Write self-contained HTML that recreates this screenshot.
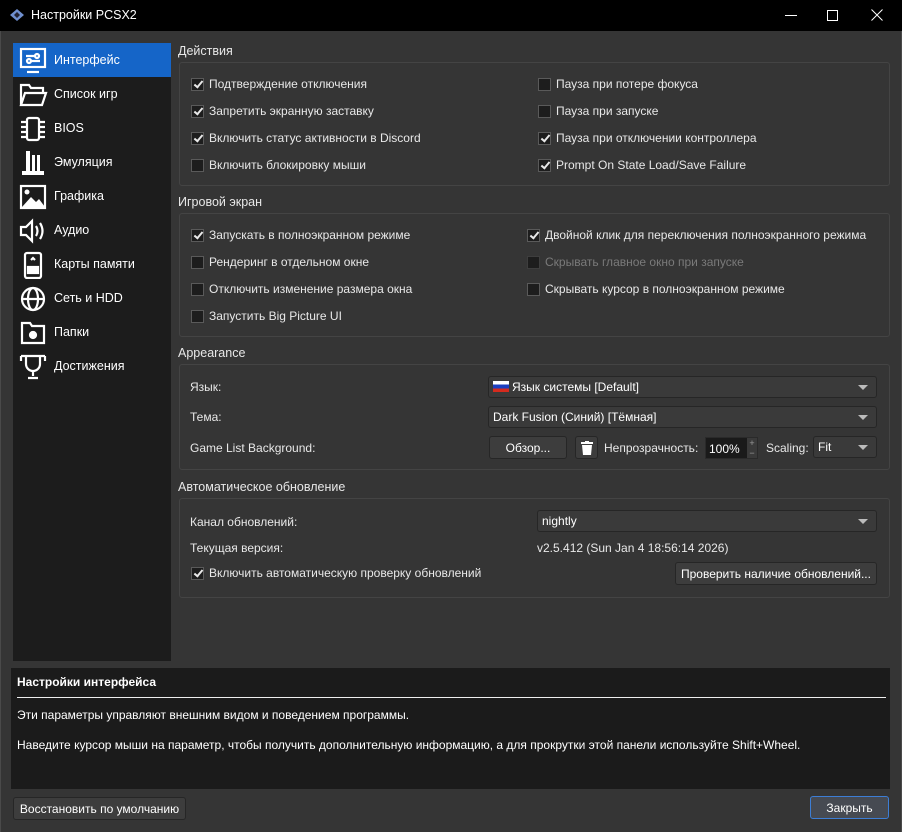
<!DOCTYPE html>
<html><head><meta charset="utf-8"><style>
*{margin:0;padding:0;box-sizing:border-box}
body{width:902px;height:832px;background:#353535;font-family:"Liberation Sans","DejaVu Sans",sans-serif;font-size:12px;color:#e8e8e8;position:relative;overflow:hidden}
.a{position:absolute;white-space:nowrap}
.title{left:0;top:0;width:902px;height:31px;background:#000}
.side{left:13px;top:43px;width:158px;height:618px;background:#1c1c1c}
.it{position:absolute;left:0;width:158px;height:34px;color:#fff;font-size:12.5px}
.it span{position:absolute;left:41px;top:10px}
.it svg{position:absolute;left:5px;top:4px}
.sel{background:#1565c8}
.lbl{font-size:12.5px}
.box{border:1px solid #444;border-radius:3px;background:#353535}
.cb{position:absolute;width:13px;height:13px;background:#1d1d1d;border:1px solid #5a5a5a}
.cb.on::after{content:"";position:absolute;left:3.5px;top:0px;width:3px;height:7px;border:solid #e8e8e8;border-width:0 2px 2px 0;transform:rotate(40deg)}
.cb.dis{border-color:#3e3e3e}
.combo{position:absolute;height:22px;background:#3a3a3a;border:1px solid #262626;border-radius:3px;padding:3px 4px;color:#fff}
.combo::after{content:"";position:absolute;right:8px;top:8px;border-left:5px solid transparent;border-right:5px solid transparent;border-top:5px solid #bbb}
.btn{position:absolute;height:23px;background:#3d3d3d;border:1px solid #262626;border-radius:3px;text-align:center;padding-top:4px;color:#fff}
</style></head><body>
<div class="a title"></div>
<div class="a" style="left:0;top:31px;width:1px;height:801px;background:#4a4a4a"></div>
<div class="a" style="left:901px;top:31px;width:1px;height:801px;background:#4a4a4a"></div>
<svg class="a" style="left:10px;top:9px" width="14" height="12" viewBox="0 0 14 12"><path d="M7 0L14 6L7 12L0 6Z" fill="#6f8fcf"/><path d="M7 3L10 6L7 9L4 6Z" fill="#223"/></svg>
<div class="a" style="left:31px;top:8px;color:#fff;font-size:12.5px">Настройки PCSX2</div>
<div class="a" style="left:785px;top:15px;width:12px;height:1px;background:#fff"></div>
<div class="a" style="left:827px;top:10px;width:11px;height:11px;border:1px solid #fff"></div>
<svg class="a" style="left:871px;top:9px" width="12" height="12"><path d="M0.5 0.5L11.5 11.5M11.5 0.5L0.5 11.5" stroke="#fff"/></svg>

<div class="a side">
<div class="it sel" style="top:0"><svg width="30" height="28" viewBox="0 0 30 28" fill="none" stroke="#fff" stroke-width="2.2"><rect x="3" y="2" width="24" height="18"/><path d="M9 25h12"/><circle cx="11" cy="14" r="2"/><path d="M13 14h9M8 9h9"/><circle cx="19" cy="9" r="2"/></svg><span>Интерфейс</span></div>
<div class="it" style="top:34px"><svg width="30" height="28" viewBox="0 0 30 28" fill="none" stroke="#fff" stroke-width="2.2"><path d="M3 24V4h8l2 3h12v5M3 24l4-12h21l-4 12z"/></svg><span>Список игр</span></div>
<div class="it" style="top:68px"><svg width="30" height="28" viewBox="0 0 30 28" fill="none" stroke="#fff" stroke-width="2.2"><rect x="9" y="3" width="12" height="22" rx="2"/><path d="M3 7h6M3 12h6M3 17h6M3 22h6M21 7h6M21 12h6M21 17h6M21 22h6"/></svg><span>BIOS</span></div>
<div class="it" style="top:102px"><svg width="30" height="28" viewBox="0 0 30 28" fill="#fff"><path d="M8 2h4v20H8zM14 6h3v16h-3zM19 6h3v16h-3zM4 22h22v4H4z"/></svg><span>Эмуляция</span></div>
<div class="it" style="top:136px"><svg width="30" height="28" viewBox="0 0 30 28"><rect x="3" y="3" width="24" height="22" fill="none" stroke="#fff" stroke-width="2.2"/><circle cx="9" cy="9" r="2.5" fill="#fff"/><path d="M4 24l9-10 5 5 3-3 6 8z" fill="#fff"/></svg><span>Графика</span></div>
<div class="it" style="top:170px"><svg width="30" height="28" viewBox="0 0 30 28" fill="none" stroke="#fff" stroke-width="2.2"><path d="M3 10h5l6-6v20l-6-6H3z"/><path d="M18 9q3 5 0 10M22 6q5 8 0 16"/></svg><span>Аудио</span></div>
<div class="it" style="top:204px"><svg width="30" height="28" viewBox="0 0 30 28" fill="none" stroke="#fff" stroke-width="2.2"><rect x="7" y="2" width="16" height="25" rx="2"/><rect x="10" y="16" width="10" height="6" fill="#fff"/><path d="M13 9l2-2 2 2"/></svg><span>Карты памяти</span></div>
<div class="it" style="top:238px"><svg width="30" height="28" viewBox="0 0 30 28" fill="none" stroke="#fff" stroke-width="2.2"><circle cx="15" cy="14" r="11"/><ellipse cx="15" cy="14" rx="5" ry="11"/><path d="M4 14h22"/></svg><span>Сеть и HDD</span></div>
<div class="it" style="top:272px"><svg width="30" height="28" viewBox="0 0 30 28" fill="none" stroke="#fff" stroke-width="2.2"><path d="M4 4h8l2 3h12v17H4z"/><circle cx="15" cy="16" r="3" fill="#fff"/></svg><span>Папки</span></div>
<div class="it" style="top:306px"><svg width="30" height="28" viewBox="0 0 30 28" fill="none" stroke="#fff" stroke-width="2.2"><path d="M8 3h14v8a7 7 0 0 1-14 0zM3 3v5M27 3v5M3 3h5M22 3h5M15 18v5M10 25h10"/></svg><span>Достижения</span></div>
</div>

<!-- Действия -->
<div class="a lbl" style="left:178px;top:44px">Действия</div>
<div class="a box" style="left:179px;top:62px;width:711px;height:124px"></div>
<div class="cb on" style="left:191px;top:78px"></div><div class="a" style="left:209px;top:77px">Подтверждение отключения</div>
<div class="cb on" style="left:191px;top:105px"></div><div class="a" style="left:209px;top:104px">Запретить экранную заставку</div>
<div class="cb on" style="left:191px;top:132px"></div><div class="a" style="left:209px;top:131px">Включить статус активности в Discord</div>
<div class="cb" style="left:191px;top:159px"></div><div class="a" style="left:209px;top:158px">Включить блокировку мыши</div>
<div class="cb" style="left:538px;top:78px"></div><div class="a" style="left:556px;top:77px">Пауза при потере фокуса</div>
<div class="cb" style="left:538px;top:105px"></div><div class="a" style="left:556px;top:104px">Пауза при запуске</div>
<div class="cb on" style="left:538px;top:132px"></div><div class="a" style="left:556px;top:131px">Пауза при отключении контроллера</div>
<div class="cb on" style="left:538px;top:159px"></div><div class="a" style="left:556px;top:158px">Prompt On State Load/Save Failure</div>

<!-- Игровой экран -->
<div class="a lbl" style="left:178px;top:195px">Игровой экран</div>
<div class="a box" style="left:179px;top:213px;width:711px;height:124px"></div>
<div class="cb on" style="left:191px;top:229px"></div><div class="a" style="left:209px;top:228px">Запускать в полноэкранном режиме</div>
<div class="cb" style="left:191px;top:256px"></div><div class="a" style="left:209px;top:255px">Рендеринг в отдельном окне</div>
<div class="cb" style="left:191px;top:283px"></div><div class="a" style="left:209px;top:282px">Отключить изменение размера окна</div>
<div class="cb" style="left:191px;top:310px"></div><div class="a" style="left:209px;top:309px">Запустить Big Picture UI</div>
<div class="cb on" style="left:527px;top:229px"></div><div class="a" style="left:545px;top:228px">Двойной клик для переключения полноэкранного режима</div>
<div class="cb dis" style="left:527px;top:256px"></div><div class="a" style="left:545px;top:255px;color:#7a7a7a">Скрывать главное окно при запуске</div>
<div class="cb" style="left:527px;top:283px"></div><div class="a" style="left:545px;top:282px">Скрывать курсор в полноэкранном режиме</div>

<!-- Appearance -->
<div class="a lbl" style="left:178px;top:346px">Appearance</div>
<div class="a box" style="left:179px;top:364px;width:711px;height:106px"></div>
<div class="a" style="left:190px;top:380px">Язык:</div>
<div class="combo" style="left:488px;top:376px;width:389px"><span style="display:inline-block;width:16px;height:11px;vertical-align:-1px;margin-right:3px;background:linear-gradient(#fff 33%,#1c3fc0 33% 66%,#d52b1e 66%)"></span>Язык системы [Default]</div>
<div class="a" style="left:190px;top:410px">Тема:</div>
<div class="combo" style="left:488px;top:406px;width:389px">Dark Fusion (Синий) [Тёмная]</div>
<div class="a" style="left:190px;top:441px">Game List Background:</div>
<div class="btn" style="left:489px;top:436px;width:78px">Обзор...</div>
<div class="btn" style="left:575px;top:436px;width:23px"><svg width="12" height="14" viewBox="0 0 12 14"><rect x="0" y="1" width="12" height="2" fill="#fff"/><rect x="4" y="0" width="4" height="2" fill="#fff"/><path d="M1 4h10l-1 10H2z" fill="#fff"/></svg></div>
<div class="a" style="left:604px;top:441px">Непрозрачность:</div>
<div class="a" style="left:705px;top:437px;width:53px;height:22px;background:#1a1a1a;border:1px solid #2a2a2a;padding:4px 3px;color:#fff">100%<span style="position:absolute;right:0;top:0;width:10px;height:20px;background:#3a3a3a;font-size:9px;color:#999;line-height:10px;text-align:center">+<br>−</span></div>
<div class="a" style="left:766px;top:441px">Scaling:</div>
<div class="combo" style="left:813px;top:436px;width:64px">Fit</div>

<!-- Обновление -->
<div class="a lbl" style="left:178px;top:480px">Автоматическое обновление</div>
<div class="a box" style="left:179px;top:498px;width:711px;height:100px"></div>
<div class="a" style="left:190px;top:515px">Канал обновлений:</div>
<div class="combo" style="left:537px;top:510px;width:340px">nightly</div>
<div class="a" style="left:190px;top:541px">Текущая версия:</div>
<div class="a" style="left:537px;top:541px">v2.5.412 (Sun Jan 4 18:56:14 2026)</div>
<div class="cb on" style="left:191px;top:567px"></div><div class="a" style="left:209px;top:566px">Включить автоматическую проверку обновлений</div>
<div class="btn" style="left:675px;top:562px;width:202px">Проверить наличие обновлений...</div>

<!-- Info -->
<div class="a" style="left:11px;top:668px;width:879px;height:121px;background:#1b1b1b"></div>
<div class="a" style="left:17px;top:675px;font-weight:bold;color:#fff">Настройки интерфейса</div>
<div class="a" style="left:17px;top:697px;width:869px;height:1px;background:#eee"></div>
<div class="a" style="left:17px;top:708px;color:#fff">Эти параметры управляют внешним видом и поведением программы.</div>
<div class="a" style="left:17px;top:738px;color:#fff">Наведите курсор мыши на параметр, чтобы получить дополнительную информацию, а для прокрутки этой панели используйте Shift+Wheel.</div>

<div class="btn" style="left:13px;top:797px;width:173px">Восстановить по умолчанию</div>
<div class="btn" style="left:810px;top:796px;width:79px;border:1px solid #3d7ed6;background:#464a52">Закрыть</div>
</body></html>
